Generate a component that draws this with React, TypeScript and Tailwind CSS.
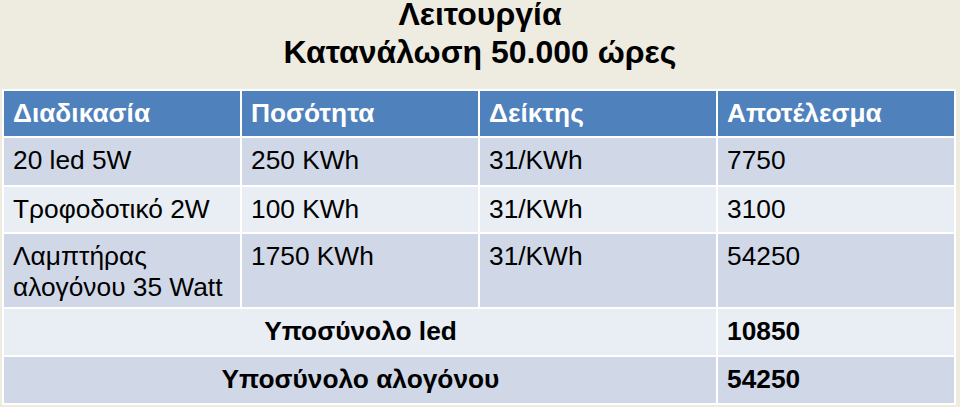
import React from 'react';

interface Row {
  process: string;
  amount: string;
  index: string;
  result: string;
}

const rows: Row[] = [
  { process: '20 led 5W', amount: '250 KWh', index: '31/KWh', result: '7750' },
  { process: 'Τροφοδοτικό 2W', amount: '100 KWh', index: '31/KWh', result: '3100' },
  { process: 'Λαμπτήρας αλογόνου 35 Watt', amount: '1750 KWh', index: '31/KWh', result: '54250' },
];

const headers = ['Διαδικασία', 'Ποσότητα', 'Δείκτης', 'Αποτέλεσμα'];

const totals = [
  { label: 'Υποσύνολο led', value: '10850' },
  { label: 'Υποσύνολο αλογόνου', value: '54250' },
];

const cell = 'pl-[9px] pr-2 pt-[7px] leading-[31px]';

export default function App() {
  return (
    <div
      className="w-[960px] h-[407px] overflow-hidden bg-[#eeece1] text-black"
      style={{ fontFamily: '"Liberation Sans", Arial, sans-serif' }}
    >
      {/* title */}
      <div className="h-[89px] text-center text-[32px] font-bold">
        <div className="leading-[29px]">Λειτουργία</div>
        <div className="leading-[46px]">Κατανάλωση 50.000 ώρες</div>
      </div>

      {/* table */}
      <div className="ml-[2px] w-[954px] grid grid-cols-4 grid-rows-[45px_47px_45px_73px_46px_46px] gap-[2px] bg-white p-[2px] text-[26.3px]">
        {headers.map((h) => (
          <div key={h} className={`${cell} bg-[#4f81bd] font-bold text-white`}>
            {h}
          </div>
        ))}

        {rows.map((r, i) => {
          const bg = i % 2 === 0 ? 'bg-[#d0d8e8]' : 'bg-[#e9edf4]';
          return (
            <React.Fragment key={r.process}>
              <div className={`${cell} ${bg}`}>{r.process}</div>
              <div className={`${cell} ${bg}`}>{r.amount}</div>
              <div className={`${cell} ${bg}`}>{r.index}</div>
              <div className={`${cell} ${bg}`}>{r.result}</div>
            </React.Fragment>
          );
        })}

        {totals.map((t, i) => {
          const bg = i % 2 === 0 ? 'bg-[#e9edf4]' : 'bg-[#d0d8e8]';
          return (
            <React.Fragment key={t.label}>
              <div className={`${cell} ${bg} col-span-3 text-center font-bold`}>{t.label}</div>
              <div className={`${cell} ${bg} font-bold`}>{t.value}</div>
            </React.Fragment>
          );
        })}
      </div>
    </div>
  );
}
